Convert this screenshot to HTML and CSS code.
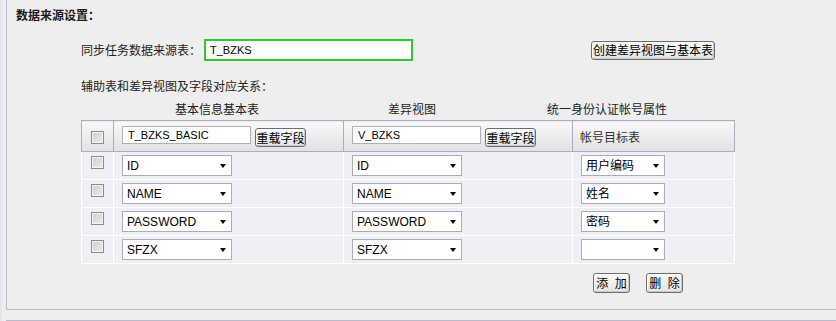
FILE: index.html
```html
<!DOCTYPE html>
<html lang="zh-CN">
  <head>
    <meta charset="UTF-8" />
    <meta name="viewport" content="width=device-width, initial-scale=1.0" />
    <title>数据来源设置</title>
    <link rel="stylesheet" href="styles.css">
  </head>
  <body>
    <div class="panel">
      <div class="title">数据来源设置：</div>
      <div class="source">
        <label class="sourceLabel">同步任务数据来源表：</label>
        <input class="sourceInput" type="text" value="T_BZKS" />
        <button type="button" class="btn createBtn">创建差异视图与基本表</button>
      </div>
      <p class="hint">辅助表和差异视图及字段对应关系：</p>
      <div class="groupTitles">
        <span class="g1">基本信息基本表</span>
        <span class="g2">差异视图</span>
        <span class="g3">统一身份认证帐号属性</span>
      </div>
      <table class="mapTable">
        <colgroup>
          <col class="c1" /><col class="c2" /><col class="c3" /><col class="c4" />
        </colgroup>
        <thead>
          <tr>
            <th class="chkCell"><input type="checkbox" class="chk" /></th>
            <th>
              <div class="cellBox">
                <input class="tableInput" type="text" value="T_BZKS_BASIC" />
                <button type="button" class="btn reload">重载字段</button>
              </div>
            </th>
            <th>
              <div class="cellBox">
                <input class="tableInput" type="text" value="V_BZKS" />
                <button type="button" class="btn reload">重载字段</button>
              </div>
            </th>
            <th class="textHead">帐号目标表</th>
          </tr>
        </thead>
        <tbody>
          <tr>
            <td class="chkCell"><input type="checkbox" class="chk" /></td>
            <td><span class="sel wide"><select><option>ID</option></select></span></td>
            <td><span class="sel wide"><select><option>ID</option></select></span></td>
            <td><span class="sel"><select><option>用户编码</option></select></span></td>
          </tr>
          <tr>
            <td class="chkCell"><input type="checkbox" class="chk" /></td>
            <td><span class="sel wide"><select><option>NAME</option></select></span></td>
            <td><span class="sel wide"><select><option>NAME</option></select></span></td>
            <td><span class="sel"><select><option>姓名</option></select></span></td>
          </tr>
          <tr>
            <td class="chkCell"><input type="checkbox" class="chk" /></td>
            <td><span class="sel wide"><select><option>PASSWORD</option></select></span></td>
            <td><span class="sel wide"><select><option>PASSWORD</option></select></span></td>
            <td><span class="sel"><select><option>密码</option></select></span></td>
          </tr>
          <tr>
            <td class="chkCell"><input type="checkbox" class="chk" /></td>
            <td><span class="sel wide"><select><option>SFZX</option></select></span></td>
            <td><span class="sel wide"><select><option>SFZX</option></select></span></td>
            <td><span class="sel"><select><option></option></select></span></td>
          </tr>
        </tbody>
      </table>
      <div class="actions">
        <button type="button" class="btn small">添 加</button>
        <button type="button" class="btn small">删 除</button>
      </div>
    </div>
    <div class="panel next"></div>
  </body>
</html>
```

FILE: styles.css
```css
html,
body {
  margin: 0;
  overflow: hidden;
}
body {
  background: #eeeeee;
  border-left: 2px solid #dfe6ef;
  font-family: "Noto Sans CJK SC", sans-serif;
  font-size: 12px;
  color: #222;
}
.panel {
  box-sizing: border-box;
  margin-left: 4px;
  height: 310px;
  border-left: 1px solid #b7bacb;
  border-bottom: 1px solid #b7bacb;
  padding-top: 7px;
}
.panel.next {
  height: 1px;
  margin-top: 10px;
  border-bottom: none;
  border-top: 1px solid #b7bacb;
  padding: 0;
}
.title {
  padding-left: 9px;
  line-height: 16px;
  font-weight: bold;
  color: #1a1a1a;
}
.source {
  display: flex;
  align-items: center;
  margin-top: 16px;
  padding-left: 74px;
  height: 22px;
}
.sourceLabel {
  width: 123px;
  line-height: 16px;
}
.sourceInput {
  box-sizing: border-box;
  width: 209px;
  height: 22px;
  margin: 0;
  border: 2px solid #33c633;
  padding: 0 4px;
  font-family: "Liberation Sans", sans-serif;
  font-size: 11px;
  color: #000;
  background: #fff;
  outline: none;
}
.btn {
  box-sizing: border-box;
  margin: 0;
  padding: 0;
  border: 1px solid #6d6d6d;
  border-radius: 3px;
  background: linear-gradient(#fbfbfb, #e3e3e3);
  box-shadow: inset -1px -1px 0 #c9c9c9, inset 1px 1px 0 #ffffff;
  font-family: "Noto Sans CJK SC", sans-serif;
  font-size: 12px;
  line-height: 16px;
  color: #000;
  white-space: nowrap;
  cursor: pointer;
}
.createBtn {
  margin-left: 178px;
  width: 124px;
  height: 19px;
}
.hint {
  margin: 17px 0 0;
  padding-left: 74px;
  line-height: 16px;
}
.groupTitles {
  display: flex;
  margin-top: 7px;
  padding-left: 168px;
  line-height: 16px;
}
.g2 {
  margin-left: 129px;
}
.g3 {
  margin-left: 111px;
}
.mapTable {
  margin: 3px 0 0 74px;
  border-collapse: collapse;
  table-layout: fixed;
  width: 653px;
}
.c1 {
  width: 32px;
}
.c2 {
  width: 230px;
}
.c3 {
  width: 229px;
}
.c4 {
  width: 162px;
}
.mapTable thead tr {
  height: 31px;
}
.mapTable tbody tr {
  height: 28px;
}
.mapTable th {
  padding: 5px 0 0 8px;
  border: 1px solid #a7aec1;
  background: linear-gradient(#f8f8f8, #e2e2e6);
  text-align: left;
  vertical-align: top;
  font-weight: normal;
}
.mapTable td {
  padding: 3px 0 0 8px;
  border: 1px solid #ffffff;
  background: #eff0f5;
  vertical-align: top;
}
.mapTable .chkCell {
  padding: 4px 0 0;
  text-align: center;
}
.mapTable th.chkCell {
  padding-top: 10px;
}
.mapTable th.textHead {
  padding: 0 0 0 7px;
  vertical-align: middle;
  color: #333;
}
.chk {
  appearance: none;
  -webkit-appearance: none;
  display: inline-block;
  width: 13px;
  height: 13px;
  margin: 0;
  border: 1px solid #8c8c8c;
  background: linear-gradient(135deg, #cfcfcf, #ececec);
  box-shadow: inset 0 0 0 1px #f3f3f3;
  vertical-align: top;
}
.cellBox {
  display: flex;
  align-items: flex-start;
  gap: 4px;
}
.tableInput {
  box-sizing: border-box;
  width: 129px;
  height: 18px;
  margin: 0;
  border: 1px solid #aeb1b8;
  padding: 0 5px;
  background: #fff;
  font-family: "Liberation Sans", sans-serif;
  font-size: 11px;
  color: #000;
}
.reload {
  width: 51px;
  height: 19px;
  margin-top: 2px;
}
.sel {
  position: relative;
  display: inline-block;
  vertical-align: top;
}
.sel select {
  appearance: none;
  -webkit-appearance: none;
  box-sizing: border-box;
  width: 84px;
  height: 21px;
  margin: 0;
  border: 1px solid #a9adbb;
  border-radius: 0;
  padding: 0 0 0 4px;
  background: #fff;
  font-family: "Liberation Sans", "Noto Sans CJK SC", sans-serif;
  font-size: 12px;
  color: #000;
}
.sel.wide select {
  width: 110px;
}
.sel::after {
  content: "";
  position: absolute;
  right: 6px;
  top: 9px;
  border-left: 3.5px solid transparent;
  border-right: 3.5px solid transparent;
  border-top: 4px solid #000;
  pointer-events: none;
}
.actions {
  display: flex;
  gap: 16px;
  margin-top: 9px;
  padding-left: 586px;
}
.small {
  width: 37px;
  height: 20px;
  letter-spacing: 2px;
  padding-left: 2px;
}
```
